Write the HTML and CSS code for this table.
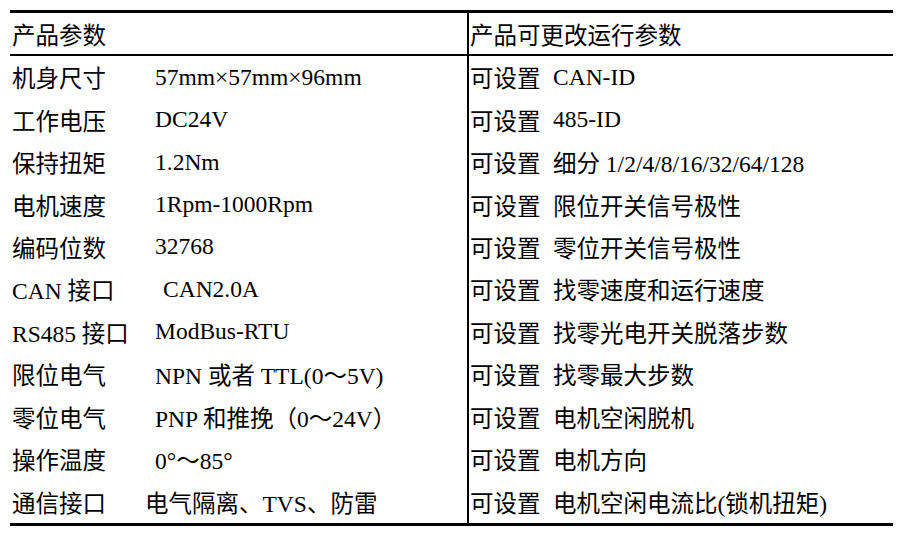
FILE: index.html
```html
<!DOCTYPE html>
<html lang="zh-CN">
<head>
<meta charset="utf-8">
<title>产品参数</title>
<link rel="stylesheet" href="styles.css">
</head>
<body>
<div class="tbl">
  <div class="row head">
    <div class="cell l">产品参数</div>
    <div class="cell r">产品可更改运行参数</div>
  </div>
  <div class="body">
    <div class="row"><div class="cell l"><span class="k">机身尺寸</span><span class="v">57mm×57mm×96mm</span></div><div class="cell r"><span class="k2">可设置</span><span class="v2">CAN-ID</span></div></div>
    <div class="row"><div class="cell l"><span class="k">工作电压</span><span class="v">DC24V</span></div><div class="cell r"><span class="k2">可设置</span><span class="v2">485-ID</span></div></div>
    <div class="row"><div class="cell l"><span class="k">保持扭矩</span><span class="v">1.2Nm</span></div><div class="cell r"><span class="k2">可设置</span><span class="v2">细分 1/2/4/8/16/32/64/128</span></div></div>
    <div class="row"><div class="cell l"><span class="k">电机速度</span><span class="v">1Rpm-1000Rpm</span></div><div class="cell r"><span class="k2">可设置</span><span class="v2">限位开关信号极性</span></div></div>
    <div class="row"><div class="cell l"><span class="k">编码位数</span><span class="v">32768</span></div><div class="cell r"><span class="k2">可设置</span><span class="v2">零位开关信号极性</span></div></div>
    <div class="row"><div class="cell l"><span class="k">CAN 接口</span><span class="v shift-r">CAN2.0A</span></div><div class="cell r"><span class="k2">可设置</span><span class="v2">找零速度和运行速度</span></div></div>
    <div class="row"><div class="cell l"><span class="k">RS485 接口</span><span class="v">ModBus-RTU</span></div><div class="cell r"><span class="k2">可设置</span><span class="v2">找零光电开关脱落步数</span></div></div>
    <div class="row"><div class="cell l"><span class="k">限位电气</span><span class="v">NPN 或者 TTL(0～5V)</span></div><div class="cell r"><span class="k2">可设置</span><span class="v2">找零最大步数</span></div></div>
    <div class="row"><div class="cell l"><span class="k">零位电气</span><span class="v">PNP 和推挽（0～24V）</span></div><div class="cell r"><span class="k2">可设置</span><span class="v2">电机空闲脱机</span></div></div>
    <div class="row"><div class="cell l"><span class="k">操作温度</span><span class="v">0°～85°</span></div><div class="cell r"><span class="k2">可设置</span><span class="v2">电机方向</span></div></div>
    <div class="row"><div class="cell l"><span class="k">通信接口</span><span class="v shift-l">电气隔离、TVS、防雷</span></div><div class="cell r"><span class="k2">可设置</span><span class="v2">电机空闲电流比(锁机扭矩)</span></div></div>
  </div>
</div>
</body>
</html>
```
FILE: styles.css
```css
html, body {
  margin: 0;
  padding: 0;
  background: #ffffff;
}
body {
  padding: 10px 0 0 10px;
  font-family: "Liberation Serif", "Noto Sans CJK SC", serif;
  font-size: 23.5px;
  color: #000000;
}
.tbl {
  width: 883px;
  border-top: 3px solid #000;
  border-bottom: 3px solid #000;
}
.row {
  display: grid;
  grid-template-columns: 459px 1fr;
  height: 42.45px;
  align-items: stretch;
}
.row.head {
  height: 41px;
  border-bottom: 2.5px solid #000;
}
.cell {
  display: flex;
  align-items: center;
  white-space: pre;
}
.cell.l {
  padding-left: 2px;
  border-right: 2px solid #000;
}
.cell.r {
  padding-left: 1px;
}
.k {
  width: 143px;
  flex: none;
}
.k2 {
  width: 83px;
  flex: none;
}
.shift-r {
  margin-left: 8px;
}
.shift-l {
  margin-left: -10px;
}
```
